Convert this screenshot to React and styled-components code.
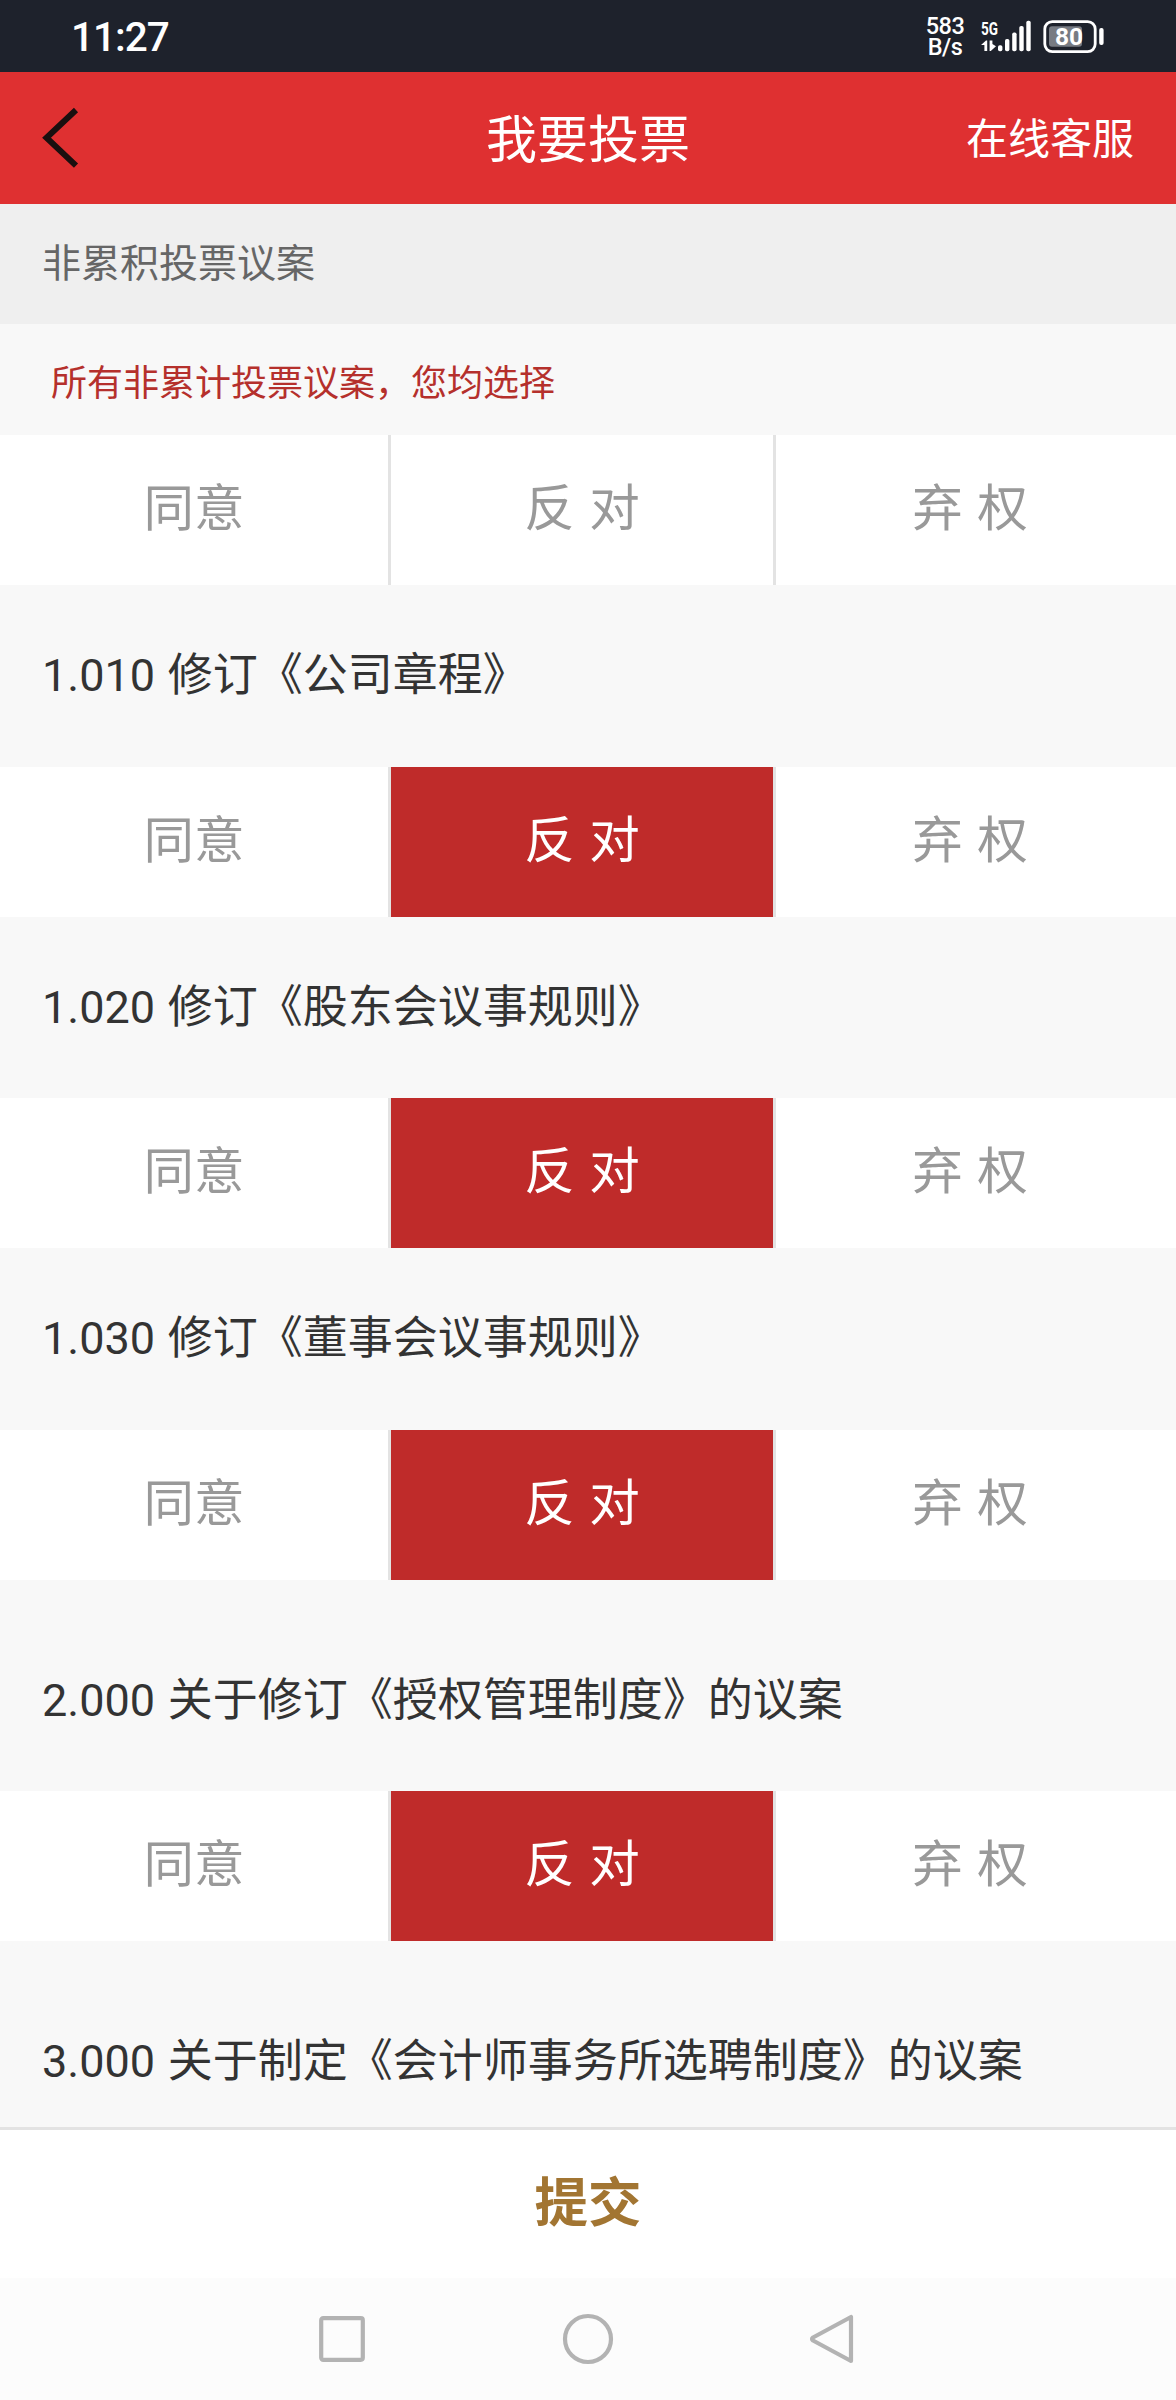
import React from "react";
import styled, { createGlobalStyle } from "styled-components";

const GlobalStyle = createGlobalStyle`
  * {
    box-sizing: border-box;
  }
  body {
    margin: 0;
    background-color: #f8f8f8;
    font-family: "Noto Sans CJK SC", "Noto Sans", sans-serif;
  }
`;

const Screen = styled.div`
  width: 1176px;
  height: 2400px;
  display: flex;
  flex-direction: column;
  overflow: hidden;
  background-color: #f8f8f8;
`;

const StatusBar = styled.div`
  height: 72px;
  flex: none;
  display: flex;
  align-items: center;
  justify-content: space-between;
  padding: 0 72px 0 71px;
  background-color: #1e222c;
  color: white;
  font-family: Roboto, sans-serif;
`;

const Clock = styled.span`
  padding-top: 2px;
  font-size: 40.5px;
  font-weight: 500;
  line-height: 48px;
  letter-spacing: -1px;
`;

const StatusRight = styled.div`
  display: flex;
  align-items: center;
`;

const Speed = styled.div`
  width: 42px;
  margin-right: 15px;
  padding-top: 2px;
  display: flex;
  flex-direction: column;
  align-items: center;
  font-size: 23.5px;
  font-weight: 500;
  line-height: 21px;
  letter-spacing: -0.5px;
`;

const Header = styled.header`
  height: 132px;
  flex: none;
  display: grid;
  grid-template-columns: 1fr auto 1fr;
  align-items: center;
  padding: 0 42px;
  background-color: #df3031;
  color: white;
`;

const Back = styled.a`
  display: flex;
`;

const Title = styled.h1`
  margin: 0;
  padding-bottom: 5px;
  font-size: 51px;
  font-weight: 400;
  line-height: 60px;
`;

const Service = styled.a`
  justify-self: end;
  padding-bottom: 4px;
  font-size: 42px;
  line-height: 50px;
`;

const Section = styled.div`
  height: 120px;
  flex: none;
  padding: 30px 42px;
  background-color: #efefef;
  color: #666;
  font-size: 39px;
  line-height: 52px;
`;

const Hint = styled.div`
  height: 111px;
  flex: none;
  padding: 31px 51px;
  color: #b5302c;
  font-size: 36px;
  line-height: 50px;
`;

const List = styled.main`
  flex: 1;
  min-height: 0;
  overflow: hidden;
`;

const ItemTitle = styled.div`
  height: ${(props) => (props.$main ? "211px" : "181.5px")};
  padding: ${(props) => (props.$main ? "91px" : "61px")} 42px 0;
  color: #333;
  font-family: Roboto, "Noto Sans CJK SC", sans-serif;
  font-size: 45px;
  line-height: 60px;
  word-spacing: 1.5px;
  white-space: pre;
`;

const Options = styled.div`
  height: 150px;
  flex: none;
  display: grid;
  grid-template-columns: 391px 385px 1fr;
  background-color: white;
`;

const Option = styled.div`
  padding-top: 39px;
  padding-right: ${(props) => (props.$last ? "12px" : "0")};
  border-right: ${(props) => (props.$last ? "none" : "3px solid #e3e3e3")};
  background-color: ${(props) => (props.$checked ? "#bf2b2a" : "white")};
  background-clip: padding-box;
  color: ${(props) => (props.$checked ? "white" : "#999")};
  font-size: 50.5px;
  line-height: 60px;
  text-align: center;
  word-spacing: 3px;
`;

const Footer = styled.div`
  height: 151px;
  flex: none;
  padding-top: 39px;
  border-top: 3px solid #e3e3e3;
  background-color: white;
  color: #a27532;
  font-size: 53.5px;
  font-weight: 700;
  line-height: 60px;
  text-align: center;
`;

const NavBar = styled.nav`
  height: 122px;
  flex: none;
  display: flex;
  align-items: center;
  justify-content: center;
  gap: 194px;
  background-color: #fcfcfc;
`;

const items = [
  { no: "1.010", name: "修订《公司章程》" },
  { no: "1.020", name: "修订《股东会议事规则》" },
  { no: "1.030", name: "修订《董事会议事规则》" },
  { no: "2.000", name: "关于修订《授权管理制度》的议案", main: true },
];

const choices = ["同意", "反 对", "弃 权"];

const SignalIcon = () => (
  <svg width="52" height="36" viewBox="0 0 52 36" fill="white">
    <text
      x="0"
      y="17"
      fontFamily="Roboto, sans-serif"
      fontSize="19"
      fontWeight="700"
      textLength="17"
      lengthAdjust="spacingAndGlyphs"
    >
      5G
    </text>
    <path d="M0 27 L5 22.5 H6.2 V33 H3.4 V27 Z" />
    <path d="M8.6 22.5 H11.4 V26 L15 28.2 L9.8 33 H8.6 Z" />
    <rect x="17" y="27.3" width="4.4" height="5.9" rx="1.8" />
    <rect x="24" y="21" width="4.4" height="12.2" rx="1.8" />
    <rect x="31.2" y="14.5" width="4.4" height="18.7" rx="1.8" />
    <rect x="38.3" y="8" width="4.4" height="25.2" rx="1.8" />
    <rect x="45.3" y="2.8" width="4.4" height="30.4" rx="1.8" />
  </svg>
);

const Battery = styled.svg`
  margin-left: 10px;
`;

const BatteryIcon = () => (
  <Battery width="61" height="36" viewBox="0 0 61 36" fill="white">
    <rect
      x="1.8"
      y="3.6"
      width="50.4"
      height="30"
      rx="7.5"
      fill="none"
      stroke="white"
      strokeWidth="2.8"
    />
    <rect x="6" y="8.3" width="33" height="20.5" rx="3" fill="#777b83" />
    <rect x="56.2" y="10" width="4.4" height="17" rx="2" />
    <text
      x="26"
      y="27.2"
      fontFamily="Roboto, sans-serif"
      fontSize="24.5"
      fontWeight="700"
      textAnchor="middle"
    >
      80
    </text>
  </Battery>
);

const OptionRow = ({ checked }) => (
  <Options>
    {choices.map((choice, i) => (
      <Option
        key={choice}
        $checked={checked === i}
        $last={i === choices.length - 1}
      >
        {choice}
      </Option>
    ))}
  </Options>
);

const App = () => {
  return (
    <Screen>
      <GlobalStyle />
      <StatusBar>
        <Clock>11:27</Clock>
        <StatusRight>
          <Speed>
            <span>583</span>
            <span>B/s</span>
          </Speed>
          <SignalIcon />
          <BatteryIcon />
        </StatusRight>
      </StatusBar>
      <Header>
        <Back>
          <svg width="40" height="64" viewBox="2 0 40 64" fill="none">
            <path
              d="M36 4 L6.5 31.7 L36 59.6"
              stroke="#1a0f0f"
              strokeWidth="6"
            />
          </svg>
        </Back>
        <Title>我要投票</Title>
        <Service>在线客服</Service>
      </Header>
      <Section>非累积投票议案</Section>
      <Hint>所有非累计投票议案，您均选择</Hint>
      <OptionRow />
      <List>
        {items.map((item) => (
          <div key={item.no}>
            <ItemTitle $main={item.main}>
              {item.no} {item.name}
            </ItemTitle>
            <OptionRow checked={1} />
          </div>
        ))}
        <ItemTitle $main>3.000 关于制定《会计师事务所选聘制度》的议案</ItemTitle>
      </List>
      <Footer>提交</Footer>
      <NavBar>
        <svg width="52" height="52" viewBox="0 0 52 52" fill="none">
          <rect
            x="5.2"
            y="5.2"
            width="41.6"
            height="41.6"
            rx="2"
            stroke="#b3b3b3"
            strokeWidth="4.2"
          />
        </svg>
        <svg width="52" height="52" viewBox="0 0 52 52" fill="none">
          <circle cx="26" cy="26" r="23" stroke="#b3b3b3" strokeWidth="4.2" />
        </svg>
        <svg width="52" height="52" viewBox="0 0 52 52" fill="none">
          <path
            d="M43 4 V48 L5 27.5 Q3 26 5 24.5 Z"
            stroke="#b3b3b3"
            strokeWidth="4.2"
            strokeLinejoin="round"
          />
        </svg>
      </NavBar>
    </Screen>
  );
};

export default App;
